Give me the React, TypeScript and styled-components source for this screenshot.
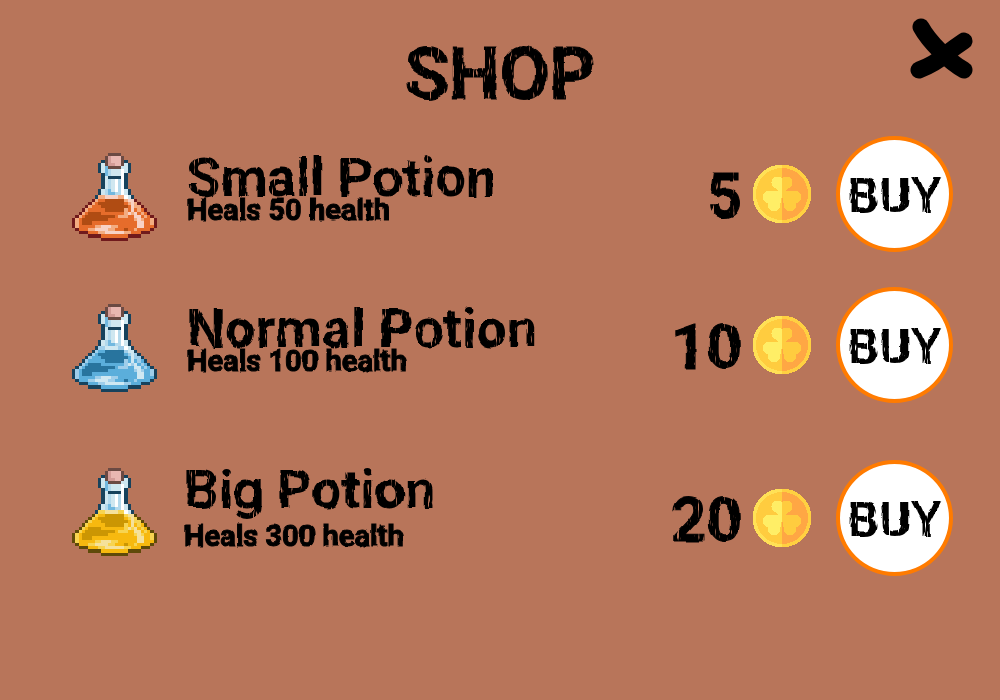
import React from "react";
import styled, { createGlobalStyle } from "styled-components";

const GlobalStyle = createGlobalStyle`
  * { box-sizing: border-box; }
  body {
    margin: 0;
    background: #b8755a;
    color: #000;
    font-family: Roboto, "Liberation Sans", sans-serif;
    font-weight: 700;
  }
`;

const Page = styled.main`
  min-height: 100vh;
`;

const Header = styled.header`
  display: grid;
  grid-template-columns: 1fr auto 1fr;
  align-items: start;
  padding: 18px 26px 0;
  min-height: 136px;
`;

const Title = styled.h1`
  grid-column: 2;
  margin: 10px 0 0;
  font-size: 72px;
  line-height: 94px;
  font-weight: 700;
  -webkit-text-stroke: 1px #000;
  filter: url(#brush);
`;

const CloseButton = styled.button`
  justify-self: end;
  padding: 0;
  border: 0;
  background: none;
  cursor: pointer;
  svg { display: block; }
`;

const List = styled.ul`
  display: flex;
  flex-direction: column;
  gap: 35px;
  margin: 0;
  padding: 0;
  list-style: none;
`;

const Item = styled.li<{ $spaced: boolean }>`
  display: flex;
  align-items: flex-start;
  min-height: 116px;
  margin-top: ${(p) => (p.$spaced ? 22 : 0)}px;
  padding: 0 47px 0 72px;
`;

const Info = styled.div<{ $spaced: boolean }>`
  flex: 1;
  display: flex;
  gap: ${(p) => (p.$spaced ? 27 : 30)}px;
  padding-top: ${(p) => (p.$spaced ? 8 : 17)}px;
`;

const Details = styled.div<{ $spaced: boolean }>`
  display: flex;
  flex-direction: column;
  gap: ${(p) => (p.$spaced ? 14 : 0)}px;
  padding-top: ${(p) => (p.$spaced ? 2 : 5)}px;
`;

const Name = styled.h2`
  margin: 0;
  font-size: 54px;
  line-height: 40px;
  white-space: nowrap;
  filter: url(#brush);
`;

const Effect = styled.p`
  margin: 0;
  font-size: 29px;
  line-height: 24px;
  -webkit-text-stroke: 1px #000;
  filter: url(#brush-fine);
`;

const Purchase = styled.div`
  display: flex;
  align-items: center;
`;

const Price = styled.span`
  margin-right: 10px;
  padding-top: 4px;
  font-size: 62px;
  line-height: 72px;
  -webkit-text-stroke: 1px #000;
  filter: url(#brush);
`;

const BuyButton = styled.button`
  width: 117px;
  height: 116px;
  margin-left: 24px;
  padding: 2px 0 0;
  border: 4px solid #ff7b00;
  border-radius: 50%;
  background: #fff;
  color: #000;
  font: inherit;
  font-size: 49px;
  cursor: pointer;
  span {
    display: block;
    filter: url(#brush);
  }
`;

const Sprite = styled.svg`
  display: block;
  flex: none;
  shape-rendering: crispEdges;
`;

/* One character per sprite pixel; "." is empty. */
const FLASK = [
  "...........KKKK...........",
  "..........KQPPPK..........",
  ".........NKQPPPKN.........",
  "........NwKQQPPKwN........",
  "........NwbKKKKwwN........",
  "........NwbvwwwWwN........",
  ".........NbvwwwWN.........",
  ".........NwNNNNWN.........",
  ".........NwvwWvWN.........",
  ".........NwvwWvWN.........",
  ".........NwvwWvWN.........",
  "........NwvbwWvWwN........",
  "........NwvbbvvWwN........",
  ".......NmmssssmmWwN.......",
  "......OmaaddddddmssO......",
  ".....OmaddddddddamsmO.....",
  "....OmaaaddddddddasmmO....",
  "...OmaaaaaddddddmasamaO...",
  "..OmaddddaaaaaaamsmsamaO..",
  ".OmadddddddddammmaassamaO.",
  "OmaddddddddaaaaaaaamsmaamO",
  "OmadddaaaaaaaaaaaaaassaamO",
  "OmaaaaammsssmmaaaaaassaaaO",
  ".OaaammssssmmaaadaamaaaaO.",
  "..OOOaaammssssssmmaaaOOO..",
  ".....OOOOaaaaaaaaOOOO.....",
  ".........OOOOOOOO.........",
];

const GLASS: Record<string, string> = {
  K: "#6b4a43", Q: "#d39b96", P: "#e9b7b1", N: "#17425c",
  w: "#cfe7f0", v: "#b3d9ec", b: "#72b8df", W: "#ffffff",
};

type Liquid = { O: string; a: string; m: string; d: string; s: string };

function Flask({ liquid }: { liquid: Liquid }) {
  const colors: Record<string, string> = { ...GLASS, ...liquid };
  return (
    <Sprite width="85" height="88" viewBox="0 0 26 27" preserveAspectRatio="none" aria-hidden="true">
      {FLASK.flatMap((row, y) =>
        [...row].map((c, x) =>
          c === "." ? null : <rect key={`${x}-${y}`} x={x} y={y} width="1" height="1" fill={colors[c]} />
        )
      )}
    </Sprite>
  );
}

function CoinHalf({ rim, face, leaf }: { rim: string; face: string; leaf: string }) {
  return (
    <>
      <circle cx="30" cy="30" r="29.5" fill={rim} />
      <circle cx="30" cy="30" r="26" fill={face} />
      <g fill={leaf}>
        <circle cx="25.5" cy="18.5" r="6" />
        <circle cx="34.5" cy="18.5" r="6" />
        <path d="M20 20 L27 28 L30 30 L33 28 L40 20 L34 14 L30 16 L26 14Z" />
        <circle cx="16.5" cy="33" r="6" />
        <circle cx="22" cy="41.5" r="6" />
        <path d="M16 27 H26 L30 30 L29 38 L26 46 L14 38Z" />
        <circle cx="43.5" cy="33" r="6" />
        <circle cx="38" cy="41.5" r="6" />
        <path d="M44 27 H34 L30 30 L31 38 L34 46 L46 38Z" />
      </g>
    </>
  );
}

function Coin() {
  return (
    <Sprite width="60" height="60" viewBox="0 0 60 60" role="img" aria-label="coins">
      <svg width="30" height="60" viewBox="0 0 30 60">
        <CoinHalf rim="#ffe156" face="#ffcc3f" leaf="#ffee66" />
      </svg>
      <svg x="30" width="30" height="60" viewBox="30 0 30 60">
        <CoinHalf rim="#ffd041" face="#ffa744" leaf="#ffcc3f" />
      </svg>
    </Sprite>
  );
}

const POTIONS = [
  {
    name: "Small Potion", effect: "Heals 50 health", price: 5, spaced: false,
    liquid: { O: "#701a1c", a: "#e66c2b", m: "#f3ac81", d: "#b04c13", s: "#f8d2c5" },
  },
  {
    name: "Normal Potion", effect: "Heals 100 health", price: 10, spaced: false,
    liquid: { O: "#17425c", a: "#5baedb", m: "#9fceea", d: "#28749e", s: "#cfe8f2" },
  },
  {
    name: "Big Potion", effect: "Heals 300 health", price: 20, spaced: true,
    liquid: { O: "#5f4a09", a: "#f7b90f", m: "#f7d451", d: "#cb9603", s: "#f5e19b" },
  },
];

export default function App() {
  return (
    <Page>
      <GlobalStyle />
      <svg width="0" height="0" style={{ display: "block" }} aria-hidden="true">
        <filter id="brush" x="-5%" y="-20%" width="110%" height="140%" colorInterpolationFilters="sRGB">
          <feTurbulence type="fractalNoise" baseFrequency="0.06" numOctaves="2" seed="4" result="rough" />
          <feDisplacementMap in="SourceGraphic" in2="rough" scale="5" xChannelSelector="R" yChannelSelector="G" result="ink" />
          <feTurbulence type="fractalNoise" baseFrequency="0.45 0.08" numOctaves="2" seed="9" />
          <feColorMatrix values="0 0 0 0 0  0 0 0 0 0  0 0 0 0 0  0 0 0 8 -5.2" result="streaks" />
          <feComposite in="ink" in2="streaks" operator="out" />
        </filter>
        <filter id="brush-fine" x="-5%" y="-20%" width="110%" height="140%" colorInterpolationFilters="sRGB">
          <feTurbulence type="fractalNoise" baseFrequency="0.08" numOctaves="2" seed="4" result="rough" />
          <feDisplacementMap in="SourceGraphic" in2="rough" scale="3" xChannelSelector="R" yChannelSelector="G" />
        </filter>
      </svg>
      <Header>
        <Title>SHOP</Title>
        <CloseButton aria-label="Close">
          <svg width="65" height="62" viewBox="0 0 65 62" fill="none" stroke="#000" strokeWidth="17" strokeLinecap="round">
            <path d="M12 9 Q18 20 31 33 Q44 46 55 52" />
            <path d="M55 23 Q46 29 37 36 Q26 46 10 52" />
          </svg>
        </CloseButton>
      </Header>
      <List>
        {POTIONS.map((p) => (
          <Item key={p.name} $spaced={p.spaced}>
            <Info $spaced={p.spaced}>
              <Flask liquid={p.liquid} />
              <Details $spaced={p.spaced}>
                <Name>{p.name}</Name>
                <Effect>{p.effect}</Effect>
              </Details>
            </Info>
            <Purchase>
              <Price>{p.price}</Price>
              <Coin />
              <BuyButton aria-label={`BUY ${p.name}`}><span>BUY</span></BuyButton>
            </Purchase>
          </Item>
        ))}
      </List>
    </Page>
  );
}
